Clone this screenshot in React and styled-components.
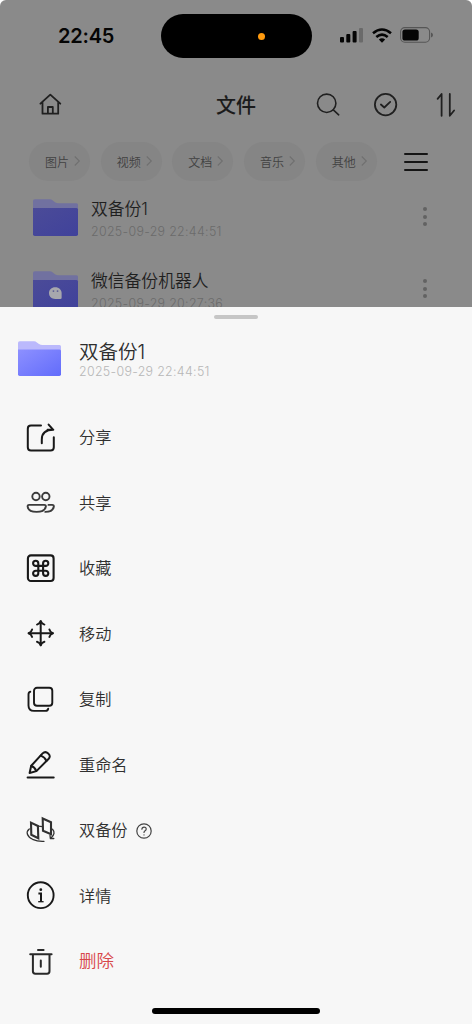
import styled, { createGlobalStyle } from "styled-components";

const GlobalStyle = createGlobalStyle`
  * {
    box-sizing: border-box;
  }

  body {
    margin: 0;
    background: #fff;
    font-family: Inter, "Noto Sans CJK SC", sans-serif;
    font-weight: 350;
  }

  svg {
    display: block;
    flex: none;
    overflow: visible;
  }
`

const Screen = styled.div`
  width: 472px;
  height: 1024px;
  display: flex;
  flex-direction: column;
  overflow: hidden;
`

const Dimmed = styled.div`
  height: 307px;
  flex: none;
  overflow: hidden;
  background: #8a8a8a;
  border-radius: 6px 6px 0 0;
`

const StatusBar = styled.div`
  height: 72px;
  padding: 0 39px 0 58px;
  display: flex;
  align-items: center;
`

const Clock = styled.div`
  width: 103px;
  font-size: 20px;
  font-weight: 600;
  letter-spacing: -0.2px;
  color: #050505;
`

const Island = styled.div`
  width: 151px;
  height: 44px;
  border-radius: 22px;
  background: #000;
  display: flex;
  align-items: center;
  padding-left: 97px;
`

const Recording = styled.div`
  width: 7px;
  height: 7px;
  border-radius: 50%;
  background: #ff9a0e;
`

const Signals = styled.div`
  margin-left: auto;
  margin-top: -2px;
  display: flex;
  align-items: center;
  gap: 8px;
`

const NavBar = styled.div`
  height: 66px;
  padding: 0 13.5px 0 38px;
  display: grid;
  grid-template-columns: 178px 1fr auto;
  align-items: center;
`

const NavTitle = styled.div`
  font-size: 20px;
  font-weight: 500;
  color: #1b1b1b;
  line-height: 26px;
  padding-top: 2px;
`

const NavActions = styled.div`
  display: flex;
  gap: 33.5px;
`

const Filters = styled.div`
  height: 46px;
  padding: 0 44px 0 29px;
  display: flex;
  align-items: center;
`

const Chip = styled.div`
  width: 61px;
  height: 39px;
  margin-right: 10.7px;
  border-radius: 20px;
  background: #858585;
  display: flex;
  align-items: center;
  justify-content: flex-end;
  gap: 5px;
  padding-right: 10px;
  font-size: 12px;
  color: #424242;
`

const MenuButton = styled.div`
  margin-left: auto;
  width: 24px;
  height: 18px;
  margin-top: 1px;
  display: flex;
  flex-direction: column;
  justify-content: space-between;

  i {
    height: 2px;
    border-radius: 1px;
    background: #151515;
  }
`

const FileRow = styled.div`
  height: 72px;
  padding: 14px 44px 0 33px;
  display: flex;

  > svg {
    margin-top: 1px;
  }
`

const FileText = styled.div`
  margin-left: 13px;
  flex: 1;
`

const FileName = styled.div`
  font-size: ${({ $large }) => ($large ? "19.5px" : "16.8px")};
  line-height: ${({ $large }) => ($large ? "24px" : "22px")};
  color: ${({ $large }) => ($large ? "#2d2d2d" : "#1f1f1f")};
`

const FileDate = styled.div`
  font-size: 12.4px;
  line-height: 16px;
  letter-spacing: 0.32px;
  font-weight: 300;
  color: ${({ $light }) => ($light ? "#b6b6b6" : "#6b6b6b")};
  margin-top: ${({ $light }) => ($light ? "0" : "4px")};
  white-space: nowrap;
`

const Dots = styled.div`
  display: flex;
  flex-direction: column;
  gap: 3.5px;
  margin-top: 9px;
  width: 5px;

  i {
    width: 4px;
    height: 4px;
    border-radius: 50%;
    background: #626262;
  }
`

const Sheet = styled.div`
  flex: 1;
  background: #f7f7f7;
  display: flex;
  flex-direction: column;
`

const Grabber = styled.div`
  width: 44px;
  height: 4px;
  margin: 8px auto 0;
  border-radius: 2px;
  background: #c6c6c6;
  flex: none;
`

const SheetHeader = styled.div`
  height: 85px;
  padding: 21px 17.5px 0;
  display: flex;

  > svg {
    margin-top: 1px;
  }
`

const SheetTitle = styled.div`
  margin-left: 18.5px;
`

const MenuItem = styled.div`
  height: 65.5px;
  padding-left: 25px;
  display: flex;
  align-items: center;
  font-size: ${({ $danger }) => ($danger ? "17.5px" : "16.2px")};
  color: ${({ $danger }) => ($danger ? "#d8474a" : "#303030")};

  > span {
    margin: 1px 0 0 22px;
    line-height: 24px;
  }

  > svg + span + svg {
    margin: 3px 0 0 8px;
  }
`

const HomeIndicator = styled.div`
  width: 168px;
  height: 6px;
  margin: auto auto 10px;
  border-radius: 3px;
  background: #000;
`

const Icon = ({ size = 32, width = 2, color = "#191919", children }) => (
  <svg width={size} height={size} viewBox={`0 0 ${size} ${size}`} fill="none" stroke={color}
    strokeWidth={width} strokeLinecap="round" strokeLinejoin="round">
    {children}
  </svg>
)

const Folder = ({ id, width, height, dim, face }) => (
  <svg width={width} height={height} viewBox="0 0 44 35" preserveAspectRatio="none">
    <defs>
      <linearGradient id={id} x1="0" y1="0" x2="1" y2="1">
        <stop offset="0" stopColor={dim ? "#4b4b98" : "#8d90ff"} />
        <stop offset="1" stopColor={dim ? "#40429b" : "#626cfb"} />
      </linearGradient>
    </defs>
    <path d="M0 2Q0 .3 1.7 .3H16.5Q18 .3 19.3 1.4L21.5 3Q23 4 25 4H42.5Q44 4 44 5.5V14H0Z"
      fill={dim ? "#7171a0" : "#bbb9fc"} />
    <path d="M0 8.5H42.5Q44 8.5 44 10V33.3Q44 35 42.3 35H1.7Q0 35 0 33.3Z" fill={`url(#${id})`} />
    {face && (
      <g>
        <path d="M21.8 15.3C25.5 15.3 28 17.8 28 21V25.2Q28 26.5 26.7 26.5H21.8C18 26.5 15.6 24 15.6 20.9S18 15.3 21.8 15.3Z" fill="#a7a7ad" />
        <circle cx="20" cy="19" r=".9" fill="#5c5c94" />
        <circle cx="24" cy="19" r=".9" fill="#5c5c94" />
      </g>
    )}
  </svg>
)

const icons = {
  share: (
    <Icon>
      <path d="M16 4.5H6Q2.8 4.5 2.8 7.7V26.3Q2.8 29.5 6 29.5H25.6Q28.8 29.5 28.8 26.3V16.3" />
      <path d="M16.8 22.3V18.5C16.8 12 20.5 8.8 28.3 8.8L23.6 3.6M22.5 8.8H28.3" />
    </Icon>
  ),
  people: (
    <Icon width={1.9} color="#3b3b3b">
      <circle cx="11" cy="10.5" r="3.7" />
      <circle cx="20.8" cy="10.5" r="3.7" />
      <path d="M4.2 18.9H19.2Q21.2 18.9 20.8 20.8C20 24.4 16.7 25.9 11.6 25.9S3.2 24.2 2.7 20.8Q2.3 18.9 4.2 18.9Z" />
      <path d="M23.5 18.9H27.2Q29.1 18.9 28.8 20.8C28.2 23.9 25.4 25.9 20.3 25.9" />
    </Icon>
  ),
  collect: (
    <Icon width={2.1}>
      <rect x="2.9" y="3.4" width="25.7" height="25.6" rx="3" />
      <path d="M13.3 13.9V11.3A2.6 2.6 0 1 0 10.7 13.9H20.7A2.6 2.6 0 1 0 18.1 11.3V21.3A2.6 2.6 0 1 0 20.7 18.7H10.7A2.6 2.6 0 1 0 13.3 21.3Z" />
    </Icon>
  ),
  move: (
    <Icon width={2}>
      <path d="M15.7 4.2V28.2M3.7 16.2H27.8" />
      <path d="M12 7.6Q14.8 6.8 15.7 4.2Q16.6 6.8 19.4 7.6M12 24.8Q14.8 25.6 15.7 28.2Q16.6 25.6 19.4 24.8" />
      <path d="M7.1 12.5Q6.3 15.3 3.7 16.2Q6.3 17.1 7.1 19.9M24.4 12.5Q25.2 15.3 27.8 16.2Q25.2 17.1 24.4 19.9" />
    </Icon>
  ),
  copy: (
    <Icon width={1.9}>
      <rect x="9" y="4.8" width="18.3" height="18" rx="3" />
      <path d="M5.3 8.8Q3.5 9.2 3.5 11.4V22.5Q3.5 27.9 9 27.9H20.4Q22.8 27.9 23.2 25.8" />
    </Icon>
  ),
  rename: (
    <Icon width={2}>
      <path d="M4.6 25L6.2 17.8L17.6 5.4Q20.3 2.8 23.2 5.4Q26.2 8.2 23.5 11L11.4 23.1Z" />
      <path d="M6.3 18Q9.8 19.1 11.2 22.8M15.7 7.6Q19.8 9 21.4 12.8" />
      <path d="M2.6 29.4H28.7" />
    </Icon>
  ),
  backup: (
    <Icon width={2.1} color="#303030">
      <path d="M6 8.6L12.9 12L13.3 24.3L6.3 20.8ZM17.7 4.5L26 8.2V20.2L18 16.7Z" strokeLinejoin="miter" />
      <path d="M13 12.2L17.6 12.6M4.3 14.9C.4 18 2.1 22.4 7.6 25.3Q12.8 27.7 19 27.3" strokeWidth="1.3" />
      <path d="M27.5 15.2Q31.3 19.2 25.9 24.3M25 21.3L25.4 24.7L28.8 24.5" strokeWidth="1.3" />
    </Icon>
  ),
  info: (
    <Icon width={1.9}>
      <circle cx="15.7" cy="16.2" r="12.9" />
      <circle cx="15.8" cy="10.7" r="1.4" fill="#191919" stroke="none" />
      <path d="M13.4 14.6H16V22.8" strokeLinecap="butt" strokeLinejoin="miter" strokeWidth="2" />
      <path d="M13.2 22.7H18.6" strokeLinecap="butt" strokeWidth="1.3" />
    </Icon>
  ),
  remove: (
    <Icon width={2} color="#292929">
      <path d="M5.2 9.3H26.6M13 4.9H18.6M7.9 9.3V26.3Q7.9 28.7 10.3 28.7H22.1Q24.5 28.7 24.5 26.3V9.3M15.8 15.6V21.7" />
    </Icon>
  ),
}

const menu = [
  { icon: "share", label: "分享" },
  { icon: "people", label: "共享" },
  { icon: "collect", label: "收藏" },
  { icon: "move", label: "移动" },
  { icon: "copy", label: "复制" },
  { icon: "rename", label: "重命名" },
  { icon: "backup", label: "双备份", help: true },
  { icon: "info", label: "详情" },
  { icon: "remove", label: "删除", danger: true },
]

const filters = ["图片", "视频", "文档", "音乐", "其他"]

const files = [
  { name: "双备份1", date: "2025-09-29 22:44:51" },
  { name: "微信备份机器人", date: "2025-09-29 20:27:36", face: true },
]

const App = () => {
  const filterList = filters.map((name) => (
    <Chip key={name}>
      {name}
      <svg width="6" height="10" viewBox="0 0 6 10" fill="none" stroke="#707070" strokeWidth="1.1">
        <path d="M.8 .5L5.3 5L.8 9.5" />
      </svg>
    </Chip>
  ))

  const fileList = files.map((file, i) => (
    <FileRow key={file.name}>
      <Folder id={`file${i}`} width={45} height={37} dim face={file.face} />
      <FileText>
        <FileName>{file.name}</FileName>
        <FileDate>{file.date}</FileDate>
      </FileText>
      <Dots><i /><i /><i /></Dots>
    </FileRow>
  ))

  return (
    <Screen>
      <GlobalStyle />
      <Dimmed>
        <StatusBar>
          <Clock>22:45</Clock>
          <Island><Recording /></Island>
          <Signals>
            <svg width="24" height="16" viewBox="0 0 24 16" fill="#050505">
              <rect x="0" y="10" width="4" height="5.5" rx="1" />
              <rect x="6.3" y="7" width="4" height="8.5" rx="1" />
              <rect x="12.6" y="4" width="4" height="11.5" rx="1" />
              <rect x="19" y="1" width="4" height="14.5" rx="1" fill="#6a6a6a" />
            </svg>
            <svg width="20" height="15" viewBox="0 0 20 15" fill="none" stroke="#050505" strokeWidth="2.6">
              <path d="M1 5.2Q10-2.2 19 5.2M4.3 8.9Q10 4.2 15.7 8.9" />
              <path d="M6.8 11.5Q10 8.9 13.2 11.5L10 14.7Z" fill="#050505" stroke="none" />
            </svg>
            <svg width="33" height="16" viewBox="0 0 33 16">
              <rect x=".6" y=".6" width="29" height="14.6" rx="4.2" fill="none" stroke="#565656" strokeWidth="1.1" />
              <rect x="2.4" y="2.5" width="16.3" height="11" rx="2.6" fill="#050505" />
              <path d="M31 5.5Q33 6.2 33 8T31 10.5Z" fill="#565656" />
            </svg>
          </Signals>
        </StatusBar>
        <NavBar>
          <Icon size={24} width={1.8} color="#202020">
            <path d="M2.4 10.7L12.3 1.6L22.3 10.7M4.5 9.3V20.7H20.2V9.3M9.9 20.5V14H14.8V20.5" />
          </Icon>
          <NavTitle>文件</NavTitle>
          <NavActions>
            <Icon size={26} width={1.6} color="#202020">
              <circle cx="12.7" cy="11.3" r="9.2" />
              <path d="M19.3 17.9L24.7 22.8" />
            </Icon>
            <Icon size={26} width={1.8} color="#202020">
              <circle cx="12.6" cy="12.6" r="10.7" />
              <path d="M7.9 12.5L11.3 15.5L17.2 9.9" />
            </Icon>
            <Icon size={26} width={1.8} color="#202020">
              <path d="M4.6 6.8L8.6 2V23.8M16.8 2V23.8L21.1 18.5" />
            </Icon>
          </NavActions>
        </NavBar>
        <Filters>
          {filterList}
          <MenuButton><i /><i /><i /></MenuButton>
        </Filters>
        {fileList}
      </Dimmed>
      <Sheet>
        <Grabber />
        <SheetHeader>
          <Folder id="current" width={43} height={35} />
          <SheetTitle>
            <FileName $large>双备份1</FileName>
            <FileDate $light>2025-09-29 22:44:51</FileDate>
          </SheetTitle>
        </SheetHeader>
        {menu.map((item) => (
          <MenuItem key={item.icon} $danger={item.danger}>
            {icons[item.icon]}
            <span>{item.label}</span>
            {item.help && (
              <Icon size={16} width={1.2} color="#444">
                <circle cx="8" cy="8" r="7.2" />
                <path d="M5.9 6.2Q6 4.1 8.1 4.1T10.2 6Q10.2 7 9.1 7.7T8 9.5M8 11.8V11.9" />
              </Icon>
            )}
          </MenuItem>
        ))}
        <HomeIndicator />
      </Sheet>
    </Screen>
  )
}

export default App;
